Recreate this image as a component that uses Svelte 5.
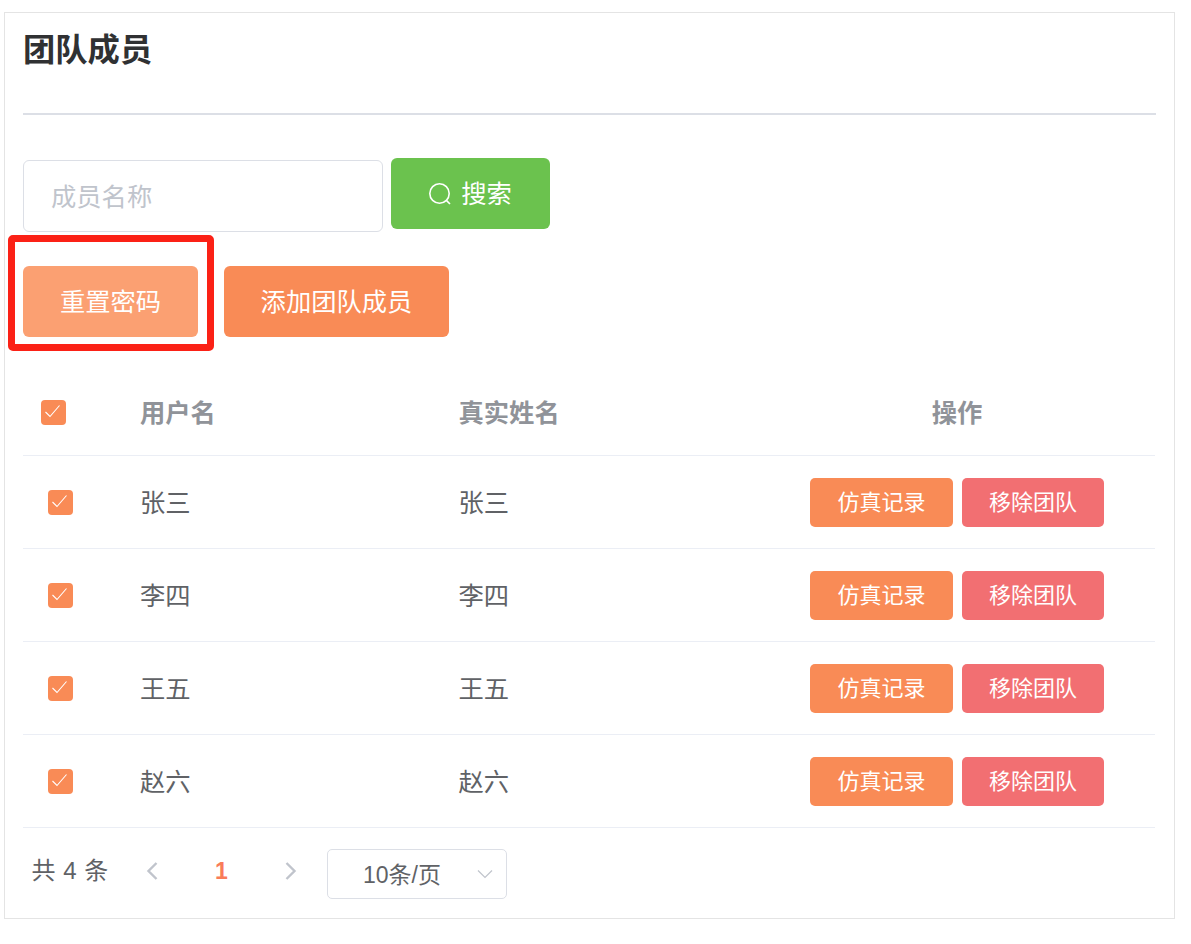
<script>
  const rows = ['张三', '李四', '王五', '赵六'];
</script>

<div class="page">
  <section class="card">
    <h1 class="title">团队成员</h1>
    <div class="divider"></div>

    <div class="search">
      <input class="input" placeholder="成员名称" />
      <button class="btn green">
        <svg class="sicon" viewBox="0 0 24 24" fill="none" stroke="currentColor" stroke-width="1.6"><circle cx="11.5" cy="11.5" r="9.7" /><path d="M18.6 18.6 22 22" /></svg>
        <span>搜索</span>
      </button>
    </div>

    <div class="actions">
      <div class="mark-wrap">
        <button class="btn light reset">重置密码</button>
        <div class="mark"></div>
      </div>
      <button class="btn orange add">添加团队成员</button>
    </div>

    <div class="table">
      <div class="row head">
        <div class="c1 headcheck"><span class="check"><svg viewBox="0 0 25 25" fill="none" stroke="#fff" stroke-width="1.1"><path d="M4.5 12 9 16.5 18.5 5.5" /></svg></span></div>
        <div class="c2">用户名</div>
        <div class="c3">真实姓名</div>
        <div class="c4">操作</div>
      </div>
      {#each rows as name}
        <div class="row">
          <div class="c1 bodycheck"><span class="check"><svg viewBox="0 0 25 25" fill="none" stroke="#fff" stroke-width="1.1"><path d="M4.5 12 9 16.5 18.5 5.5" /></svg></span></div>
          <div class="c2">{name}</div>
          <div class="c3">{name}</div>
          <div class="c4 ops">
            <button class="sbtn orange rec">仿真记录</button>
            <button class="sbtn pink del">移除团队</button>
          </div>
        </div>
      {/each}
    </div>

    <div class="pager">
      <span class="total">共 4 条</span>
      <svg class="chev prev" viewBox="0 0 12 20" fill="none" stroke="#c0c4cc" stroke-width="2.4"><path d="M10.5 2 2.5 10l8 8" /></svg>
      <span class="num">1</span>
      <svg class="chev next" viewBox="0 0 12 20" fill="none" stroke="#c0c4cc" stroke-width="2.4"><path d="M1.5 2l8 8-8 8" /></svg>
      <div class="select">
        <span>10条/页</span>
        <svg class="down" viewBox="0 0 16 10" fill="none" stroke="#c0c4cc" stroke-width="1.2"><path d="M1 1.5 8 8.5l7-7" /></svg>
      </div>
    </div>
  </section>
</div>

<style>
  :global(body) {
    margin: 0;
    background: #fff;
  }
  .page {
    padding: 12px 16px 25px 4px;
    font-family: "Liberation Sans", "Noto Sans CJK SC", sans-serif;
    color: #606266;
  }
  .card {
    box-sizing: border-box;
    height: 907px;
    border: 1px solid #e4e4e4;
    padding: 0 18px;
    background: #fff;
  }
  .title {
    margin: 0;
    padding-top: 13px;
    height: 84px;
    box-sizing: border-box;
    font-size: 32.3px;
    line-height: 42px;
    font-weight: 700;
    color: #303133;
    font-family: "Noto Sans CJK SC", sans-serif;
  }
  .divider {
    height: 2px;
    margin-top: 16px;
    background: #dcdfe6;
    width: 1133px;
  }
  .search {
    display: flex;
    align-items: flex-start;
    gap: 8px;
    height: 71px;
    margin-top: 43px;
  }
  .input {
    box-sizing: border-box;
    width: 360px;
    height: 72px;
    margin-top: 2px;
    padding: 2px 27px 0;
    border: 1px solid #dcdfe6;
    border-radius: 6px;
    font: 25.3px "Liberation Sans", "Noto Sans CJK SC", sans-serif;
    color: #606266;
    outline: none;
  }
  .input::placeholder {
    color: #c0c4cc;
    opacity: 1;
  }
  .btn {
    box-sizing: border-box;
    height: 71px;
    border: 0;
    border-radius: 6px;
    color: #fff;
    font: 25.3px "Liberation Sans", "Noto Sans CJK SC", sans-serif;
    padding: 0 0 3px;
    display: inline-flex;
    align-items: center;
    justify-content: center;
  }
  .green {
    background: #6bc24e;
    width: 159px;
    gap: 9px;
    padding: 0;
  }
  .green span {
    margin-bottom: 3px;
  }
  .sicon {
    width: 24px;
    height: 24px;
    margin-left: -1px;
  }
  .orange {
    background: #f98b56;
  }
  .light {
    background: #fba072;
  }
  .pink {
    background: #f26f72;
  }
  .actions {
    display: flex;
    gap: 26px;
    margin-top: 37px;
  }
  .mark-wrap {
    position: relative;
  }
  .reset {
    width: 175px;
  }
  .add {
    width: 225px;
  }
  .mark {
    position: absolute;
    left: -15px;
    top: -31px;
    right: -16px;
    bottom: -14px;
    border: 7px solid #fb2116;
    border-radius: 5px;
  }
  .table {
    margin-top: 32px;
    width: 1132px;
  }
  .row {
    display: grid;
    grid-template-columns: 94px 319px 323px 396px;
    align-items: center;
    height: 93px;
    box-sizing: border-box;
    border-bottom: 1px solid #ebeef5;
    font-size: 25.3px;
    font-family: "Noto Sans CJK SC", sans-serif;
    color: #606266;
  }
  .head {
    height: 87px;
    font-weight: 700;
    color: #909399;
  }
  .c2,
  .c3 {
    padding-left: 23px;
    padding-bottom: 2px;
  }
  .c3 {
    padding-left: 22.5px;
  }
  .c4 {
    text-align: center;
  }
  .head .c4 {
    padding-bottom: 2px;
  }
  .ops {
    display: flex;
    justify-content: center;
    gap: 9px;
  }
  .check {
    display: block;
    width: 25px;
    height: 25px;
    border-radius: 4px;
    background: #f98b56;
  }
  .check svg {
    display: block;
    width: 25px;
    height: 25px;
  }
  .headcheck {
    padding-left: 18px;
  }
  .bodycheck {
    padding-left: 25px;
  }
  .sbtn {
    box-sizing: border-box;
    height: 49px;
    border: 0;
    border-radius: 5px;
    color: #fff;
    font: 22px "Liberation Sans", "Noto Sans CJK SC", sans-serif;
    padding: 0 0 4px;
  }
  .rec {
    width: 143px;
  }
  .del {
    width: 142px;
  }
  .pager {
    display: flex;
    align-items: center;
    height: 50px;
    margin-top: 21px;
  }
  .total {
    margin-left: 8.5px;
    width: 76.5px;
    font-size: 24px;
    line-height: 44px;
    white-space: nowrap;
    word-spacing: 1px;
    margin-bottom: 6px;
  }
  .chev {
    width: 12px;
    height: 20px;
    margin-bottom: 6px;
  }
  .prev {
    margin-left: 38px;
  }
  .num {
    margin-left: 57px;
    width: 70px;
    font-size: 23px;
    font-weight: 700;
    color: #f97c59;
    margin-bottom: 6px;
  }
  .select {
    box-sizing: border-box;
    width: 180px;
    height: 50px;
    margin-left: 30px;
    border: 1px solid #dcdfe6;
    border-radius: 5px;
    display: flex;
    align-items: center;
    padding-left: 35px;
    padding-bottom: 2px;
    font-size: 23px;
    position: relative;
  }
  .down {
    position: absolute;
    right: 13px;
    top: 19px;
    width: 16px;
    height: 10px;
  }
</style>
